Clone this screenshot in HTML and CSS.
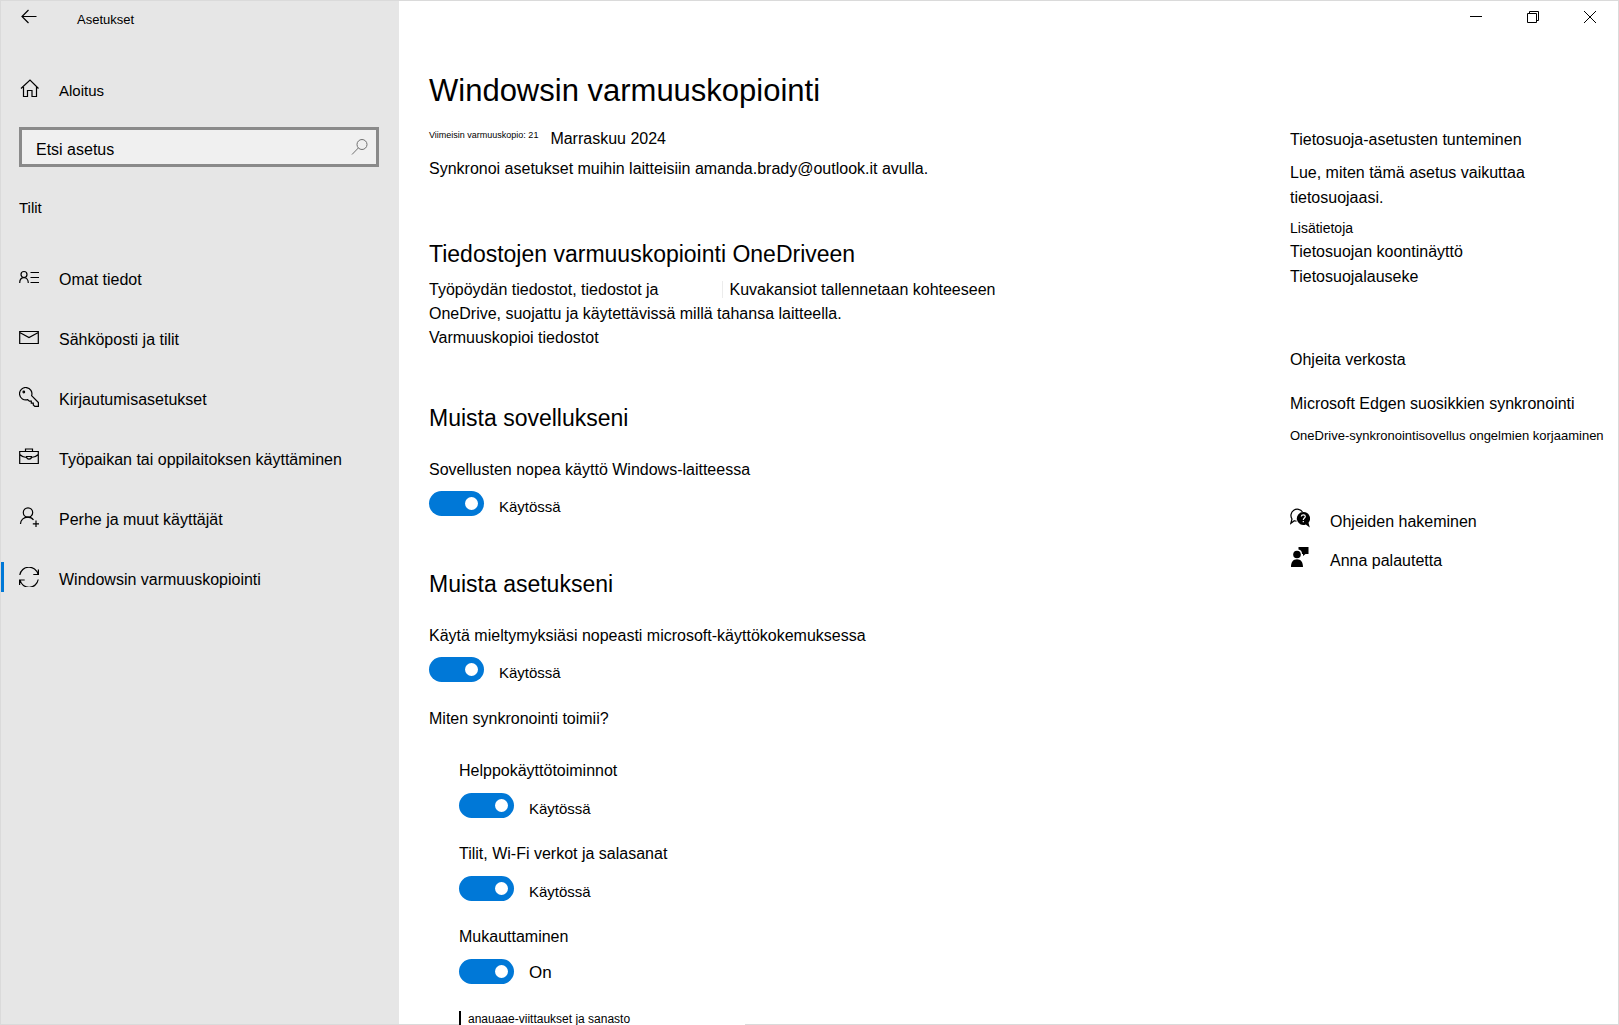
FILE: index.html
```html
<!DOCTYPE html>
<html lang="fi">
<head>
<meta charset="UTF-8">
<meta name="viewport" content="width=device-width, initial-scale=1">
<title>Asetukset</title>
<link rel="stylesheet" href="styles.css">
</head>
<body>

<div class="window">

    <div class="sidebar">
        <div class="titlebar">
            <button type="button" class="back" aria-label="Takaisin">
                <svg width="17" height="16" viewBox="0 0 17 16"><path d="M16.500 7.500H2M8.500 1L2 7.500L8.500 14"/></svg>
            </button>
            <span class="app-name">Asetukset</span>
        </div>

        <a href="#" class="nav-link home">
            <svg width="20" height="20" viewBox="0 0 20 20"><path d="M2 10.500L11 2L19.500 10.500M4.500 9V18.500H8.500V12.500H13V18.500H17.500V9"/></svg>
            Aloitus
        </a>

        <div class="search">
            <input type="text" placeholder="Etsi asetus" aria-label="Etsi asetus">
            <svg width="18" height="18" viewBox="0 0 18 18"><circle cx="11" cy="6.500" r="5"/><path d="M7.300 10L1 16.500"/></svg>
        </div>

        <h2 class="nav-title">Tilit</h2>

        <ul class="nav">
            <li>
                <a href="#" class="nav-link">
                    <svg width="20" height="20" viewBox="0 0 20 20"><circle cx="5" cy="7.500" r="3"/><path d="M.7 16C.7 12.500 2.500 10.700 5 10.700S9.300 12.500 9.300 16M11.500 5.500H20M11.500 10.500H20M11.500 15.500H20"/></svg>
                    Omat tiedot
                </a>
            </li>
            <li>
                <a href="#" class="nav-link">
                    <svg width="20" height="20" viewBox="0 0 20 20"><path d="M.7 4.500H19.300V16.500H.7ZM.7 5.500L10 10.500L19.300 5.500"/></svg>
                    Sähköposti ja tilit
                </a>
            </li>
            <li>
                <a href="#" class="nav-link">
                    <svg width="20" height="20" viewBox="0 0 20 20"><path d="M12.600 8.700A6.200 6.200 0 1 0 8.700 12.600L10.300 14.200H12.300V16.200H14.300V18L15.800 19.400H19.400V15.600Z"/><circle cx="4.800" cy="5" r=".8"/></svg>
                    Kirjautumisasetukset
                </a>
            </li>
            <li>
                <a href="#" class="nav-link">
                    <svg width="20" height="20" viewBox="0 0 20 20"><path d="M.7 4.500H19.300V16.500H.7ZM6.500 4.500V2H13.500V4.500M.7 7.500C3 9.800 5.500 10.500 7.500 10.500M12.500 10.500C14.500 10.500 17 9.800 19.300 7.500M7.500 9.500H12.500C12.500 13 7.500 13 7.500 9.500Z"/></svg>
                    Työpaikan tai oppilaitoksen käyttäminen
                </a>
            </li>
            <li>
                <a href="#" class="nav-link">
                    <svg width="20" height="20" viewBox="0 0 20 20"><circle cx="9" cy="5.500" r="4.700"/><path d="M1.500 17C1.500 13 4.500 10.200 9 10.200C11.300 10.200 13.300 11.200 14.500 13M17 13.500V20M13.800 16.800H20"/></svg>
                    Perhe ja muut käyttäjät
                </a>
            </li>
            <li>
                <a href="#" class="nav-link active" aria-current="page">
                    <svg width="20" height="20" viewBox="0 0 20 20"><path d="M.8 8A9.300 9.300 0 0 1 19 7.200M19.400 2.500V7.500H14.300M19.200 12.500A9.300 9.300 0 0 1 1 13.200M.6 18V13H5.700"/></svg>
                    Windowsin varmuuskopiointi
                </a>
            </li>
        </ul>
    </div>

    <div class="page">
        <div class="window-controls">
            <button type="button" aria-label="Pienennä">
                <svg width="14" height="14" viewBox="0 0 14 14"><path d="M1 6.500H13"/></svg>
            </button>
            <button type="button" aria-label="Palauta">
                <svg width="14" height="14" viewBox="0 0 14 14"><path d="M1.500 3.500H10.500V12.500H1.500ZM3.500 3.500V1.500H12.500V10.500H10.500"/></svg>
            </button>
            <button type="button" aria-label="Sulje">
                <svg width="14" height="14" viewBox="0 0 14 14"><path d="M1 1L13 13M13 1L1 13"/></svg>
            </button>
        </div>

        <div class="content">
            <main>
                <h1>Windowsin varmuuskopiointi</h1>
                <p class="last-backup"><small>Viimeisin varmuuskopio: 21</small> <span>Marraskuu 2024</span></p>
                <p class="account">Synkronoi asetukset muihin laitteisiin amanda.brady@outlook.it avulla.</p>

                <section class="onedrive">
                    <h2>Tiedostojen varmuuskopiointi OneDriveen</h2>
                    <p>
                        Työpöydän tiedostot, tiedostot ja<span class="folders">Kuvakansiot tallennetaan kohteeseen</span><br>
                        OneDrive, suojattu ja käytettävissä millä tahansa laitteella.
                    </p>
                    <a href="#">Varmuuskopioi tiedostot</a>
                </section>

                <section class="setting">
                    <h2>Muista sovellukseni</h2>
                    <label for="apps">Sovellusten nopea käyttö Windows-laitteessa</label>
                    <div class="toggle">
                        <input type="checkbox" id="apps" checked>
                        <span>Käytössä</span>
                    </div>
                </section>

                <section class="setting">
                    <h2>Muista asetukseni</h2>
                    <label for="prefs">Käytä mieltymyksiäsi nopeasti microsoft-käyttökokemuksessa</label>
                    <div class="toggle">
                        <input type="checkbox" id="prefs" checked>
                        <span>Käytössä</span>
                    </div>
                </section>

                <a href="#" class="how">Miten synkronointi toimii?</a>

                <div class="sub-settings">
                    <div>
                        <label for="access">Helppokäyttötoiminnot</label>
                        <div class="toggle">
                            <input type="checkbox" id="access" checked>
                            <span>Käytössä</span>
                        </div>
                    </div>
                    <div>
                        <label for="passwords">Tilit, Wi-Fi verkot ja salasanat</label>
                        <div class="toggle">
                            <input type="checkbox" id="passwords" checked>
                            <span>Käytössä</span>
                        </div>
                    </div>
                    <div>
                        <label for="personal">Mukauttaminen</label>
                        <div class="toggle">
                            <input type="checkbox" id="personal" checked>
                            <span class="large">On</span>
                        </div>
                    </div>
                    <p class="cut-off"><span>anauaae-viittaukset ja sanasto</span></p>
                </div>
            </main>

            <aside>
                <div class="privacy">
                    <h3>Tietosuoja-asetusten tunteminen</h3>
                    <p>Lue, miten tämä asetus vaikuttaa tietosuojaasi.</p>
                    <a href="#" class="more">Lisätietoja</a>
                    <a href="#">Tietosuojan koontinäyttö</a>
                    <a href="#">Tietosuojalauseke</a>
                </div>

                <div class="web-help">
                    <h3>Ohjeita verkosta</h3>
                    <a href="#">Microsoft Edgen suosikkien synkronointi</a>
                    <a href="#" class="fix">OneDrive-synkronointisovellus ongelmien korjaaminen</a>
                </div>

                <div class="support">
                    <a href="#">
                        <svg width="20" height="20" viewBox="0 0 20 20">
                            <path class="line" d="M6.500 13.200C5.500 13.100 5 13 4.300 12.700L.8 15.300L2 11A6.300 6.300 0 1 1 12.500 4"/>
                            <path d="M13.300 4A6.500 6.500 0 1 0 15.800 16.500L19.800 19.500L18.500 14.700A6.500 6.500 0 0 0 13.300 4Z"/>
                            <path class="mark" d="M11.300 8.500C11.500 6.300 15.300 6.300 15.300 8.600C15.300 10 13.300 10.200 13.300 12M13.300 13V14.300"/>
                        </svg>
                        Ohjeiden hakeminen
                    </a>
                    <a href="#">
                        <svg width="20" height="20" viewBox="0 0 20 20">
                            <circle cx="7" cy="7.500" r="3.800"/>
                            <path d="M1 20C1 15 3.300 12.300 7 12.300S13 15 13 20ZM8.500 0H18.500V7H15.500L13 9V7H12C12 4.500 11 3 8.500 2.500Z"/>
                        </svg>
                        Anna palautetta
                    </a>
                </div>
            </aside>
        </div>
    </div>

</div>

</body>
</html>
```
FILE: styles.css
```css
* {
    box-sizing: border-box;
}

body {
    margin: 0;
    height: 100vh;
    overflow: hidden;
    background-color: #fff;
    color: #000;
    font-family: "Liberation Sans", Arial, sans-serif;
    font-size: 16px;
    line-height: 24px;
}

h1, h2, h3, p, ul {
    margin: 0;
    padding: 0;
    font-weight: normal;
}

h1 {
    font-size: 31px;
    line-height: 40px;
}

h2 {
    font-size: 23px;
    line-height: 32px;
}

h3 {
    font-size: 16px;
}

a {
    color: inherit;
    text-decoration: none;
}

button {
    display: flex;
    align-items: center;
    padding: 0;
    border: none;
    background: none;
    cursor: pointer;
}

svg {
    flex: none;
    fill: none;
    stroke: #000;
    stroke-width: 1.2;
}

.window {
    display: flex;
    height: 100vh;
    border: 1px solid #dadada;
}

/* sidebar */

.sidebar {
    flex: none;
    width: 398px;
    background-color: #e6e6e6;
}

.titlebar {
    display: flex;
    align-items: center;
    gap: 40px;
    height: 31px;
    padding-left: 19px;
}

.app-name {
    padding-top: 6px;
    font-size: 13px;
}

.nav-link {
    display: flex;
    align-items: center;
    height: 60px;
}

.nav-link::before {
    content: "";
    width: 3px;
    height: 30px;
    margin: 0 15px 6px 0;
}

.nav-link.active::before {
    background-color: #0078d7;
}

.nav-link svg {
    margin: 0 20px 6px 0;
}

.nav-link.home {
    height: 28px;
    margin-top: 45px;
    font-size: 15px;
}

.search {
    display: flex;
    align-items: center;
    height: 40px;
    margin: 22px 20px 0 18px;
    padding-right: 7px;
    border: 3px solid #8a8a8a;
    background-color: #f0f0f0;
}

.search input {
    flex: 1;
    min-width: 0;
    padding: 6px 0 0 14px;
    border: none;
    outline: none;
    background: none;
    font: inherit;
}

.search input::placeholder {
    color: #000;
    opacity: 1;
}

.search svg {
    stroke: #707070;
    stroke-width: 1;
}

.nav-title {
    margin: 31px 18px 32px;
    font-size: 15px;
    line-height: 20px;
}

.nav {
    list-style: none;
}

/* main area */

.page {
    flex: 1;
    min-width: 0;
}

.window-controls {
    display: flex;
    justify-content: flex-end;
    height: 32px;
}

.window-controls button {
    justify-content: center;
    width: 57px;
}

.window-controls svg {
    stroke-width: 1;
}

.content {
    display: flex;
}

main {
    flex: 1;
    min-width: 0;
    padding: 38px 30px 0;
}

main label,
main a,
aside a {
    display: block;
}

.last-backup {
    display: flex;
    gap: 12px;
    margin-top: 16px;
}

.last-backup small {
    font-size: 9px;
    line-height: 16px;
}

.account {
    margin-top: 6px;
}

.onedrive {
    margin-top: 57px;
}

.onedrive p {
    margin-top: 8px;
}

.folders {
    margin-left: 64px;
    padding-left: 6px;
    border-left: 1px solid #ececec;
}

.setting {
    margin-top: 52px;
}

.setting label {
    margin-top: 24px;
}

.toggle {
    display: flex;
    align-items: center;
    gap: 15px;
    height: 25px;
    margin-top: 10px;
}

.setting .toggle {
    margin-top: 9px;
}

.toggle input {
    appearance: none;
    display: flex;
    align-items: center;
    width: 55px;
    height: 25px;
    margin: 0;
    padding: 0 6px;
    border-radius: 13px;
    background-color: #999;
    cursor: pointer;
}

.toggle input::before {
    content: "";
    width: 13px;
    height: 13px;
    border-radius: 50%;
    background-color: #fff;
}

.toggle input:checked {
    justify-content: flex-end;
    background-color: #0078d7;
}

.toggle span {
    padding-top: 6px;
    font-size: 15px;
    line-height: 18px;
}

.toggle .large {
    padding-top: 3px;
    font-size: 17px;
}

.how {
    margin-top: 25px;
}

.sub-settings {
    display: flex;
    flex-direction: column;
    gap: 24px;
    margin: 28px 0 0 30px;
}

.cut-off {
    width: 286px;
    padding-top: 3px;
    font-size: 12px;
    line-height: 16px;
}

.cut-off span {
    display: block;
    padding-left: 7px;
    border-left: 2px solid #000;
    background-color: #fff;
}

/* right column */

aside {
    flex: none;
    width: 328px;
    padding: 95px 16px 0 0;
}

.privacy p {
    max-width: 260px;
    margin: 8px 0 7px;
    line-height: 25px;
}

.privacy a {
    line-height: 25px;
}

.privacy .more {
    font-size: 14px;
    line-height: 22px;
}

.web-help {
    margin-top: 59px;
}

.web-help h3 {
    margin-bottom: 20px;
}

.web-help .fix {
    margin-top: 10px;
    font-size: 13px;
    line-height: 20px;
    white-space: nowrap;
}

.support {
    margin-top: 56px;
}

.support a {
    display: flex;
    align-items: center;
    gap: 20px;
    height: 39px;
}

.support svg {
    margin-bottom: 8px;
    fill: #000;
    stroke: none;
}

.support .line {
    fill: none;
    stroke: #000;
}

.support .mark {
    fill: none;
    stroke: #fff;
}
```
